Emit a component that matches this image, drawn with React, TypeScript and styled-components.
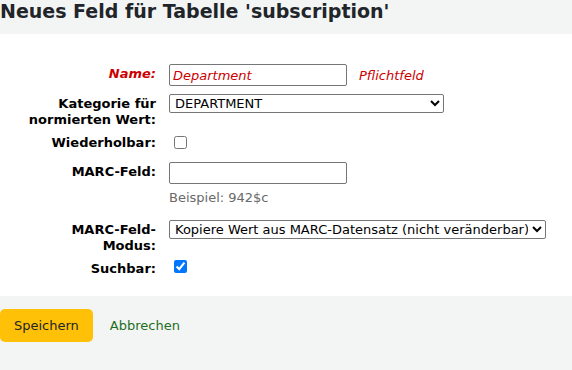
import React from "react";
import styled, { createGlobalStyle } from "styled-components";

const GlobalStyle = createGlobalStyle`
  html, body {
    margin: 0;
    padding: 0;
    background: #f3f4f4;
    font-family: "DejaVu Sans", sans-serif;
    font-size: 13px;
    color: #000;
  }
`;

const Page = styled.div`
  width: 572px;
  min-height: 370px;
  background: #f3f4f4;
`;

const Title = styled.h1`
  margin: 0;
  padding: 0 0 12px 0;
  font-size: 19px;
  line-height: 22px;
  font-weight: bold;
  color: #212529;
`;

const Fieldset = styled.fieldset`
  margin: 0;
  border: 0;
  padding: 30px 0 19px 0;
  background: #fff;
`;

const List = styled.ol`
  list-style: none;
  margin: 0;
  padding: 0;
`;

const Row = styled.li<{ $gap?: number }>`
  display: flex;
  align-items: flex-start;
  margin-bottom: ${(p) => p.$gap ?? 8}px;
`;

const Label = styled.label<{ $required?: boolean }>`
  width: 131px;
  margin-left: 25px;
  margin-right: 13px;
  text-align: right;
  font-weight: bold;
  line-height: 16px;
  padding-top: 2px;
  color: ${(p) => (p.$required ? "#cc0000" : "#000")};
  font-style: ${(p) => (p.$required ? "italic" : "normal")};
`;

const Field = styled.div`
  display: flex;
  flex-direction: column;
`;

const Inline = styled.div`
  display: flex;
  align-items: center;
`;

const TextInput = styled.input<{ $required?: boolean }>`
  box-sizing: border-box;
  width: 178px;
  height: 22px;
  margin: 0;
  padding: 1px 3px;
  border: 1px solid #767676;
  border-radius: 2px;
  font-family: "DejaVu Sans", sans-serif;
  font-size: 13px;
  color: ${(p) => (p.$required ? "#cc0000" : "#000")};
  font-style: ${(p) => (p.$required ? "italic" : "normal")};
`;

const Select = styled.select<{ $w: number }>`
  box-sizing: border-box;
  width: ${(p) => p.$w}px;
  height: 19px;
  margin: 0;
  padding: 0 1px;
  border: 1px solid #767676;
  border-radius: 2px;
  background: #fff;
  font-family: "DejaVu Sans", sans-serif;
  font-size: 13px;
  color: #000;
`;

const Check = styled.input<{ $top?: number }>`
  width: 13px;
  height: 13px;
  margin: ${(p) => p.$top ?? 1}px 0 0 5px;
`;

const RequiredNote = styled.span`
  margin-left: 12px;
  color: #cc0000;
  font-style: italic;
`;

const Hint = styled.div`
  margin-top: 6px;
  color: #696969;
  line-height: 16px;
`;

const Actions = styled.div`
  display: flex;
  align-items: center;
  gap: 17px;
  padding: 13px 0;
`;

const SaveButton = styled.button`
  height: 33px;
  padding: 0 14px;
  border: 0;
  border-radius: 5px;
  background: #ffc107;
  color: #212529;
  font-family: "DejaVu Sans", sans-serif;
  font-size: 13px;
`;

const CancelLink = styled.a`
  color: #1d6f1d;
  text-decoration: none;
`;

export default function App() {
  return (
    <Page>
      <GlobalStyle />
      <Title>Neues Feld für Tabelle 'subscription'</Title>
      <Fieldset>
        <List>
          <Row>
            <Label $required>Name:</Label>
            <Inline>
              <TextInput $required defaultValue="Department" />
              <RequiredNote>Pflichtfeld</RequiredNote>
            </Inline>
          </Row>
          <Row $gap={5}>
            <Label>Kategorie für normierten Wert:</Label>
            <Select $w={275} defaultValue="DEPARTMENT">
              <option>DEPARTMENT</option>
            </Select>
          </Row>
          <Row $gap={11}>
            <Label>Wiederholbar:</Label>
            <Check type="checkbox" $top={3} />
          </Row>
          <Row $gap={14}>
            <Label>MARC-Feld:</Label>
            <Field>
              <TextInput />
              <Hint>Beispiel: 942$c</Hint>
            </Field>
          </Row>
          <Row $gap={5}>
            <Label>MARC-Feld-Modus:</Label>
            <Select $w={377}>
              <option>Kopiere Wert aus MARC-Datensatz (nicht veränderbar)</option>
            </Select>
          </Row>
          <Row $gap={0}>
            <Label>Suchbar:</Label>
            <Check type="checkbox" defaultChecked />
          </Row>
        </List>
      </Fieldset>
      <Actions>
        <SaveButton>Speichern</SaveButton>
        <CancelLink href="#">Abbrechen</CancelLink>
      </Actions>
    </Page>
  );
}
